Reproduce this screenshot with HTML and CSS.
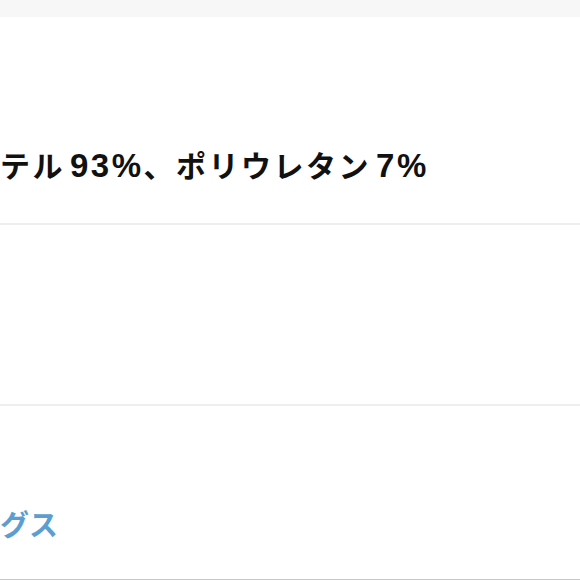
FILE: index.html
```html
<!DOCTYPE html>
<html lang="ja">
<head>
  <meta charset="utf-8">
  <title>商品情報</title>
  <link rel="stylesheet" href="styles.css">
</head>
<body>
  <div class="top-bar"></div>

  <div class="section material">
    <p class="material-text">テル<span class="num">93%</span>、ポリウレタン<span class="num">7%</span></p>
  </div>

  <div class="section empty"></div>

  <div class="section tags">
    <a class="tag-link" href="#">グス</a>
  </div>
</body>
</html>
```

FILE: styles.css
```css
body {
  font-family: "Liberation Sans", "Noto Sans CJK JP", sans-serif;
  margin: 0;
  background-color: #ffffff;
  height: 580px;
  overflow: hidden;
}

.top-bar {
  height: 17px;
  background-color: #f7f7f7;
}

.section {
  background-color: #ffffff;
  border-bottom: 2px solid #eeeeee;
}

.material {
  height: 206px;
  display: flex;
  align-items: flex-end;
}

.material-text {
  margin: 0 0 37px 0;
  font-size: 30px;
  font-weight: bold;
  letter-spacing: 2.5px;
  color: #111111;
  line-height: 1.2;
}

.material-text .num {
  padding-left: 5px;
  font-size: 33px;
  letter-spacing: 2.5px;
}

.empty {
  height: 179px;
}

.tags {
  height: 173px;
  border-bottom: 1px solid #c8c8c8;
  display: flex;
  align-items: flex-end;
}

.tag-link {
  margin-bottom: 35px;
  font-size: 29px;
  font-weight: bold;
  color: #5b9ecf;
  text-decoration: none;
  line-height: 1.2;
}
```
